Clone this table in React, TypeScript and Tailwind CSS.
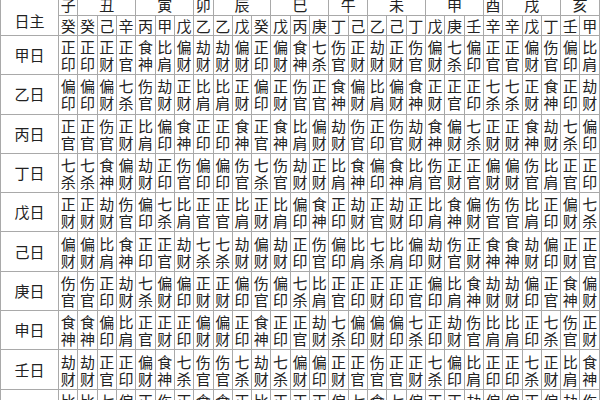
import React from "react";

const STEMS = "甲乙丙丁戊己庚辛壬癸";

// 地支 with their hidden stems, in the order the table shows them
const branches = [
  { name: "子", hidden: "癸" },
  { name: "丑", hidden: "癸己辛" },
  { name: "寅", hidden: "丙甲戊" },
  { name: "卯", hidden: "乙" },
  { name: "辰", hidden: "乙戊癸" },
  { name: "巳", hidden: "戊丙庚" },
  { name: "午", hidden: "丁己" },
  { name: "未", hidden: "乙己丁" },
  { name: "申", hidden: "戊庚壬" },
  { name: "酉", hidden: "辛" },
  { name: "戌", hidden: "辛戊丁" },
  { name: "亥", hidden: "壬甲" },
];

const rowLabels = ["甲日", "乙日", "丙日", "丁日", "戊日", "己日", "庚日", "申日", "壬日", "癸日"];

const hiddenStems = branches.flatMap((b) => b.hidden.split(""));

// ten gods relation from day master d to stem s
function tenGod(d: number, s: number): string {
  const ed = Math.floor(d / 2);
  const es = Math.floor(s / 2);
  const same = d % 2 === s % 2;
  if (ed === es) return same ? "比肩" : "劫财";
  if ((ed + 1) % 5 === es) return same ? "食神" : "伤官";
  if ((ed + 2) % 5 === es) return same ? "偏财" : "正财";
  if ((es + 2) % 5 === ed) return same ? "七杀" : "正官";
  return same ? "偏印" : "正印";
}

const cell = "border border-[#a9a9a9] p-0 text-center";

export default function App() {
  return (
    <div className="w-[600px] h-[400px] overflow-hidden bg-white text-[#222] font-['Noto_Sans_CJK_SC','Noto_Sans_CJK_JP',sans-serif]">
      <table className="-mt-[4px] w-[600px] table-fixed border-collapse">
        <colgroup>
          <col className="w-[58px]" />
          {hiddenStems.map((_, i) => (
            <col key={i} />
          ))}
        </colgroup>
        <tbody>
          <tr className="h-[19px]">
            <td rowSpan={2} className={`${cell} align-top pt-[16px] text-[15px] leading-[16px]`}>
              日主
            </td>
            {branches.map((b) => (
              <td
                key={b.name}
                colSpan={b.hidden.length}
                className={`${cell} text-[15px] leading-[16px] align-top`}
              >
                {b.name}
              </td>
            ))}
          </tr>
          <tr className="h-[20px]">
            {hiddenStems.map((s, i) => (
              <td key={i} className={`${cell} text-[15px] leading-[18px]`}>
                {s}
              </td>
            ))}
          </tr>
          {rowLabels.map((label, r) => (
            <tr key={label} className="h-[39.3px]">
              <td className={`${cell} text-[15px] leading-[16px]`}>{label}</td>
              {hiddenStems.map((s, i) => {
                const god = tenGod(r, STEMS.indexOf(s));
                return (
                  <td key={i} className={`${cell} text-[15px] leading-[17px]`}>
                    {god[0]}
                    <br />
                    {god[1]}
                  </td>
                );
              })}
            </tr>
          ))}
        </tbody>
      </table>
    </div>
  );
}
